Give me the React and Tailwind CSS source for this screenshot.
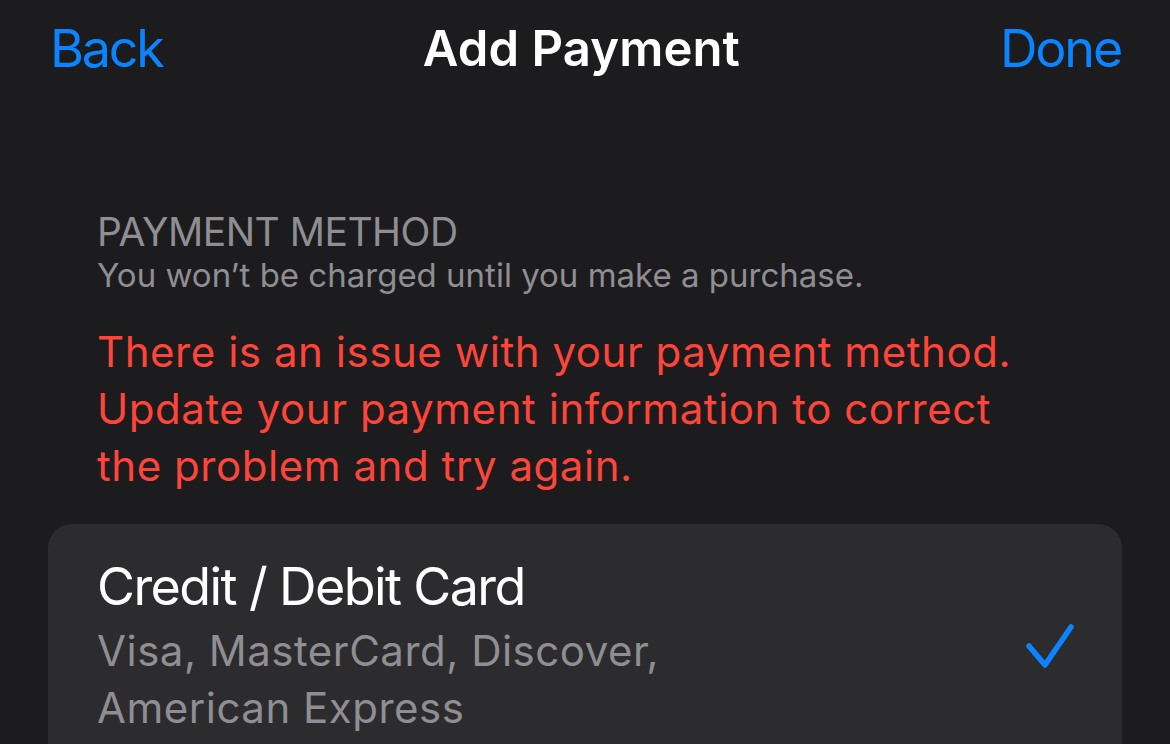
export default function App() {
  return (
    <div className="min-h-screen w-full bg-[#1c1c1e] text-white overflow-hidden" style={{ fontFamily: 'Inter, "Noto Sans", sans-serif' }}>
      {/* Nav bar */}
      <header className="flex items-start justify-between pl-[50px] pr-[49px] pt-[18px]">
        <button className="text-[52px] leading-[62px] text-[#0a84ff] tracking-[-2.2px]">Back</button>
        <h1 className="text-[49px] leading-[62px] font-semibold tracking-[0.1px]">Add Payment</h1>
        <button className="text-[52px] leading-[62px] text-[#0a84ff] tracking-[-2.2px]">Done</button>
      </header>

      {/* Section header */}
      <section className="px-[97px] mt-[129px]">
        <p className="text-[39px] leading-[46px] text-[#8e8e93] uppercase tracking-[-0.5px]">Payment Method</p>
        <p className="text-[33px] leading-[40px] text-[#8e8e93]">You won’t be charged until you make a purchase.</p>
        <p className="mt-[28px] text-[42px] leading-[57px] text-[#ff453a] tracking-[0.55px] w-[960px]">
          There is an issue with your payment method. Update your payment information to correct the problem and try again.
        </p>
      </section>

      {/* Payment option card */}
      <div className="mx-[48px] mt-[30px] rounded-t-[24px] bg-[#2c2c2e] pl-[49px] pr-[47px] pt-[32px] pb-[40px] flex items-start justify-between">
        <div>
          <p className="text-[52px] leading-[62px] tracking-[-1.6px]">Credit / Debit Card</p>
          <p className="mt-[4px] text-[42px] leading-[57px] text-[#8e8e93] tracking-[0.5px] w-[620px]">Visa, MasterCard, Discover, American Express</p>
        </div>
        <svg className="mt-[66px]" width="50" height="48" viewBox="0 0 50 48" fill="none">
          <path d="M4 24 L20 43 L46 5" stroke="#0a84ff" strokeWidth="5.5" strokeLinecap="round" strokeLinejoin="round" />
        </svg>
      </div>
    </div>
  );
}
